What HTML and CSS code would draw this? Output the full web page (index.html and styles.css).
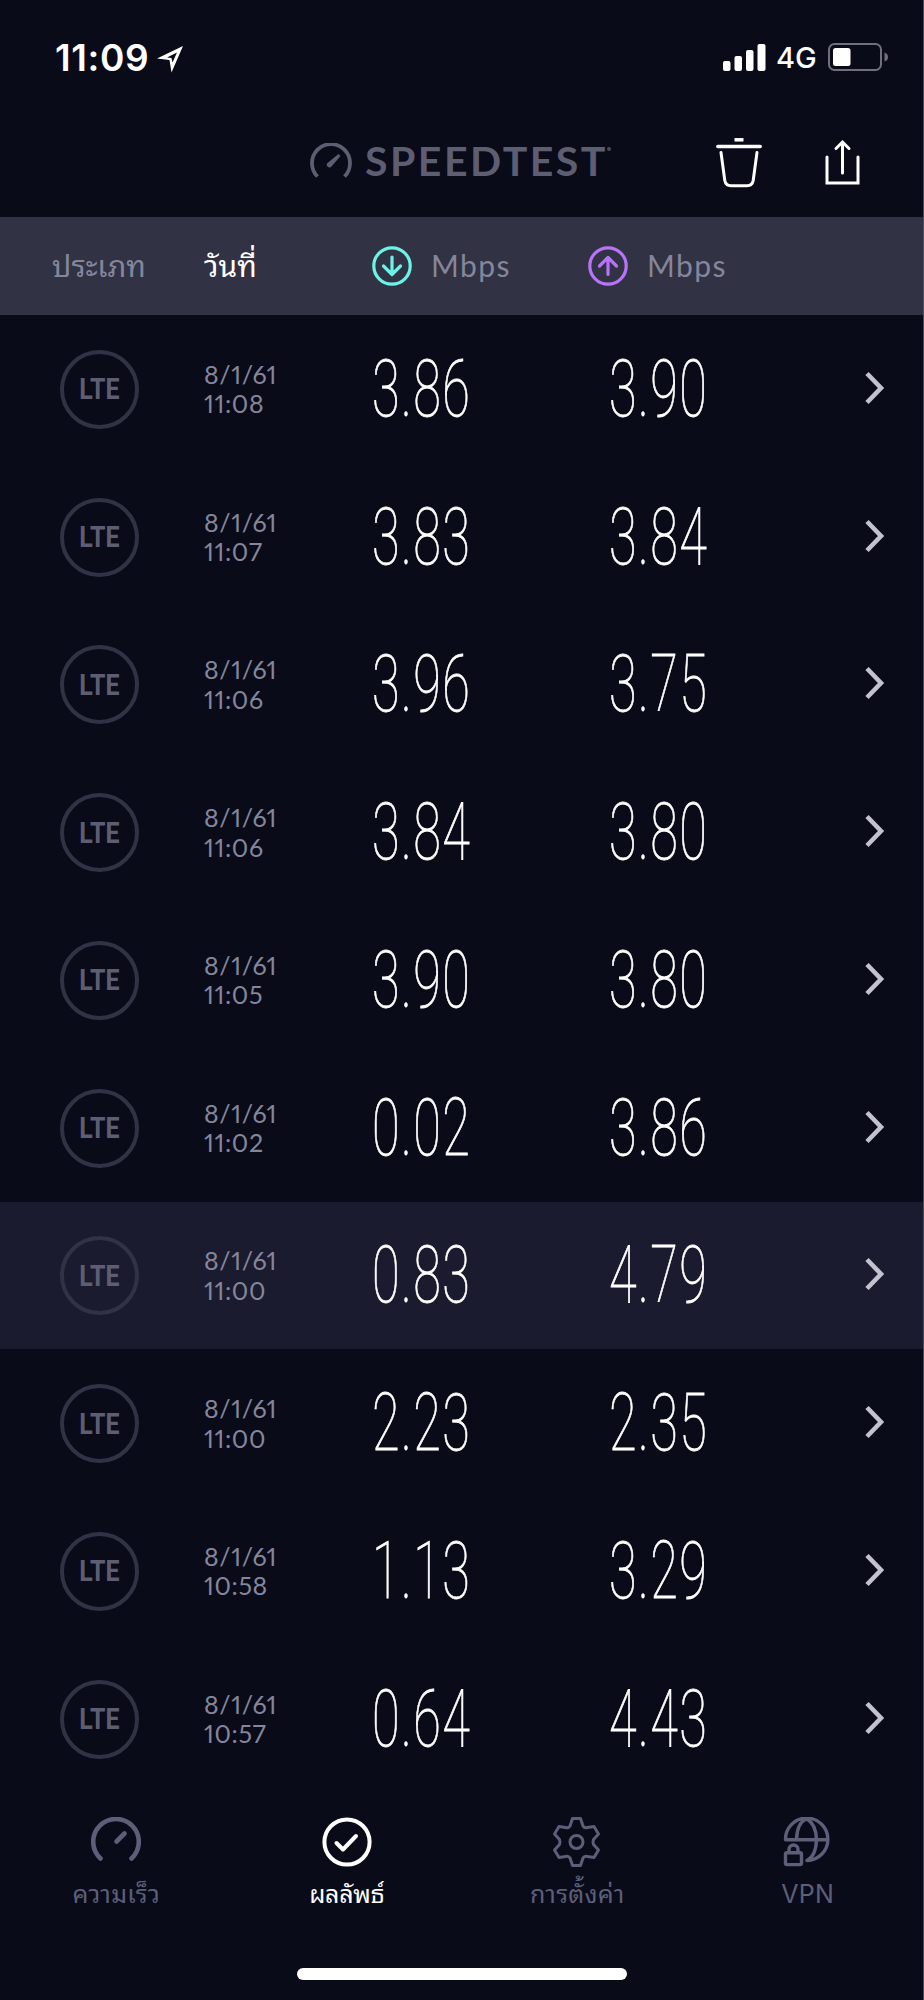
FILE: index.html
```
<!DOCTYPE html>
<html lang="th">
<head>
  <meta charset="utf-8">
  <title>Speedtest</title>
  <link rel="stylesheet" href="styles.css">
</head>
<body>
  <svg class="defs" width="0" height="0">
    <symbol id="chevron" viewBox="0 0 22 34">
      <path d="M4 2.500 L18 17 L4 31.500" fill="none" stroke="currentColor" stroke-width="4.600"/>
    </symbol>
  </svg>

  <div class="screen">
    <div class="status-bar">
      <div class="time">11:09</div>
      <svg class="location" viewBox="0 0 26 27">
        <path d="M0 12.500 L26 0 L14.500 26.500 L12.500 14 Z M10 11.500 L20 6.500 L15.500 16.500 L14.500 12 Z" fill="#fff" fill-rule="evenodd"/>
      </svg>
      <div class="status-right">
        <svg class="signal" viewBox="0 0 43 27">
          <rect x="0" y="17" width="7.5" height="10" rx="2"/>
          <rect x="11.5" y="12" width="7.5" height="15" rx="2"/>
          <rect x="23" y="6" width="7.5" height="21" rx="2"/>
          <rect x="34.5" y="0" width="8" height="27" rx="2"/>
        </svg>
        <span class="network">4G</span>
        <svg class="battery" viewBox="0 0 62 28">
          <rect x="1" y="1" width="52" height="26" rx="5.5" fill="none" stroke="#6f707c" stroke-width="2"/>
          <rect x="5" y="5" width="17.5" height="18" rx="2.5" fill="#fff"/>
          <path d="M56.500 9.500 Q60 10.500 60 14 Q60 17.500 56.500 18.500 Z" fill="#6f707c"/>
        </svg>
      </div>
    </div>

    <div class="nav-bar">
      <div class="logo">
        <svg class="logo-icon" viewBox="0 0 42 36">
          <path d="M7.500 33.500 A19 19 0 1 1 34.500 33.500" fill="none" stroke="currentColor" stroke-width="3.800"/>
          <path d="M28.500 11 L30.500 13 L21.500 23.500 A2.500 2.500 0 0 1 17.500 20 Z" fill="currentColor"/>
        </svg>
        <span class="logo-text">SPEEDTEST</span><span class="dot"></span>
      </div>
      <svg class="trash" viewBox="0 0 46 50">
        <path d="M18.500 1.800 H27.500" stroke-width="3.500"/>
        <path d="M1.800 8.600 H44.200" stroke-width="3.500" stroke-linecap="round"/>
        <path d="M5 14.500 L8.800 42.500 Q9.800 47.700 15 47.700 H31 Q36.200 47.700 37.200 42.500 L41 14.500" stroke-width="3" stroke-linecap="round"/>
      </svg>
      <svg class="share" viewBox="0 0 36 46">
        <path d="M2 18 V44 H33 V18" stroke-linecap="round"/>
        <path d="M17.500 34 V3.500 M11 9.500 L17.500 3 L24 9.500" stroke-linecap="round"/>
      </svg>
    </div>

    <div class="row table-head">
      <div class="col-type">ประเภท</div>
      <div class="col-date selected">วันที่</div>
      <div class="col-down">
        <svg class="arrow down" viewBox="0 0 40 40"><circle cx="20" cy="20" r="18.200"/><path d="M20 11 V28 M11.500 20 L20 28.500 L28.500 20"/></svg>
        <span>Mbps</span>
      </div>
      <div class="col-up">
        <svg class="arrow up" viewBox="0 0 40 40"><circle cx="20" cy="20" r="18.200"/><path d="M20 28.500 V12 M11.500 20 L20 11.500 L28.500 20"/></svg>
        <span>Mbps</span>
      </div>
    </div>

    <div class="results">
      <div class="row result">
        <div class="badge"><span>LTE</span></div>
        <div class="date">8/1/61<br>11:08</div>
        <div class="speed"><span>3.86</span></div>
        <div class="speed"><span>3.90</span></div>
        <svg class="chevron"><use href="#chevron"/></svg>
      </div>
      <div class="row result">
        <div class="badge"><span>LTE</span></div>
        <div class="date">8/1/61<br>11:07</div>
        <div class="speed"><span>3.83</span></div>
        <div class="speed"><span>3.84</span></div>
        <svg class="chevron"><use href="#chevron"/></svg>
      </div>
      <div class="row result">
        <div class="badge"><span>LTE</span></div>
        <div class="date">8/1/61<br>11:06</div>
        <div class="speed"><span>3.96</span></div>
        <div class="speed"><span>3.75</span></div>
        <svg class="chevron"><use href="#chevron"/></svg>
      </div>
      <div class="row result">
        <div class="badge"><span>LTE</span></div>
        <div class="date">8/1/61<br>11:06</div>
        <div class="speed"><span>3.84</span></div>
        <div class="speed"><span>3.80</span></div>
        <svg class="chevron"><use href="#chevron"/></svg>
      </div>
      <div class="row result">
        <div class="badge"><span>LTE</span></div>
        <div class="date">8/1/61<br>11:05</div>
        <div class="speed"><span>3.90</span></div>
        <div class="speed"><span>3.80</span></div>
        <svg class="chevron"><use href="#chevron"/></svg>
      </div>
      <div class="row result">
        <div class="badge"><span>LTE</span></div>
        <div class="date">8/1/61<br>11:02</div>
        <div class="speed"><span>0.02</span></div>
        <div class="speed"><span>3.86</span></div>
        <svg class="chevron"><use href="#chevron"/></svg>
      </div>
      <div class="row result highlighted">
        <div class="badge"><span>LTE</span></div>
        <div class="date">8/1/61<br>11:00</div>
        <div class="speed"><span>0.83</span></div>
        <div class="speed"><span>4.79</span></div>
        <svg class="chevron"><use href="#chevron"/></svg>
      </div>
      <div class="row result">
        <div class="badge"><span>LTE</span></div>
        <div class="date">8/1/61<br>11:00</div>
        <div class="speed"><span>2.23</span></div>
        <div class="speed"><span>2.35</span></div>
        <svg class="chevron"><use href="#chevron"/></svg>
      </div>
      <div class="row result">
        <div class="badge"><span>LTE</span></div>
        <div class="date">8/1/61<br>10:58</div>
        <div class="speed"><span>1.13</span></div>
        <div class="speed"><span>3.29</span></div>
        <svg class="chevron"><use href="#chevron"/></svg>
      </div>
      <div class="row result">
        <div class="badge"><span>LTE</span></div>
        <div class="date">8/1/61<br>10:57</div>
        <div class="speed"><span>0.64</span></div>
        <div class="speed"><span>4.43</span></div>
        <svg class="chevron"><use href="#chevron"/></svg>
      </div>
    </div>

    <div class="tab-bar">
      <div class="tab">
        <svg viewBox="0 0 50 50">
          <path d="M9.500 41.500 A22.800 22.800 0 1 1 40.500 41.500" stroke-width="4.600"/>
          <path d="M25.500 24.500 L33.500 16.500" stroke-width="4.600"/>
        </svg>
        <span>ความเร็ว</span>
      </div>
      <div class="tab active">
        <svg viewBox="0 0 50 50">
          <circle cx="25" cy="25" r="22.600" stroke-width="4"/>
          <path d="M14.500 26 L21 32.500 L34 19" stroke-width="4"/>
        </svg>
        <span>ผลลัพธ์</span>
      </div>
      <div class="tab">
        <svg viewBox="0 0 50 50">
          <path d="M20.500 1.500 H28.500 L31 9 Q32.500 11.500 35.500 10.500 L42 9.500 L46.500 17 L41.500 22.500 Q40.500 25 41.500 27.500 L46.500 33 L42 40.500 L35.500 39.500 Q32.500 38.500 31 41 L28.500 48.500 H20.500 L18 41 Q16.500 38.500 13.500 39.500 L7 40.500 L2.500 33 L7.500 27.500 Q8.500 25 7.500 22.500 L2.500 17 L7 9.500 L13.500 10.500 Q16.500 11.500 18 9 Z" stroke-width="3"/>
          <circle cx="24.500" cy="25" r="6.500" stroke-width="3"/>
        </svg>
        <span>การตั้งค่า</span>
      </div>
      <div class="tab">
        <svg viewBox="0 0 50 50">
          <path d="M2.500 22.800 A21.200 21.200 0 1 1 24 43.500 M2.500 22.800 H44 M13.500 22.500 Q14 6 23.500 1.800 Q33 7 33.500 22.500 Q33 39 24 43.500" stroke-width="3.400"/>
          <rect x="2.500" y="35.800" width="16" height="11.800" rx="1.500" stroke-width="3.400"/>
          <path d="M6 35.500 V32.500 A4.500 4.500 0 0 1 15 32.500 V35.500" stroke-width="3.400"/>
        </svg>
        <span>VPN</span>
      </div>
    </div>
    <div class="home-indicator"></div>
  </div>
</body>
</html>
```
FILE: styles.css
```
* {
  box-sizing: border-box;
}

body {
  margin: 0;
  background: #090b19;
  font-family: Inter, "Noto Sans Thai Looped", Loma, sans-serif;
  color: #fff;
}

.defs {
  display: block;
}

.screen {
  display: flex;
  flex-direction: column;
  width: 924px;
  height: 2000px;
  overflow: hidden;
  border-right: 1px solid #4b4c5c;
}

/* status bar */
.status-bar {
  display: flex;
  align-items: center;
  height: 114px;
  padding: 0 33px 0 55px;
}

.time {
  width: 102px;
  font-size: 37px;
  font-weight: 600;
  letter-spacing: 0.6px;
}

.location {
  width: 26px;
  height: 27px;
  margin-top: 4px;
}

.status-right {
  display: flex;
  align-items: center;
  margin-left: auto;
}

.signal {
  width: 43px;
  height: 27px;
  fill: #fff;
}

.network {
  width: 62px;
  padding-left: 10px;
  font-size: 29px;
  font-weight: 500;
}

.battery {
  width: 62px;
  height: 28px;
}

/* nav bar */
.nav-bar {
  display: flex;
  height: 103px;
  padding: 24px 60px 0 310px;
}

.logo {
  display: flex;
  width: 406px;
  padding-top: 5px;
  color: #5d5e72;
}

.logo-icon {
  width: 42px;
  height: 36px;
}

.logo-text {
  width: 242px;
  margin: -6px 0 0 13px;
  font-family: Lato, sans-serif;
  font-size: 41px;
  font-weight: 700;
  line-height: 48px;
  letter-spacing: 2.5px;
}

.dot {
  width: 4px;
  height: 4px;
  margin-top: 4px;
  border-radius: 50%;
  background: #4b4c5c;
}

.trash,
.share {
  fill: none;
  stroke: #fff;
}

.trash {
  width: 46px;
  height: 50px;
}

.share {
  width: 36px;
  height: 46px;
  margin: 1px 0 0 63px;
  stroke-width: 3px;
}

/* table */
.row {
  display: grid;
  align-items: center;
}

.table-head {
  grid-template-columns: 152px 168px 216px 1fr;
  height: 98px;
  padding-left: 52px;
  background: #313244;
  font-size: 30px;
  color: #85869b;
}

.col-type,
.col-date {
  padding-bottom: 5px;
}

.table-head .selected {
  color: #fff;
}

.col-down,
.col-up {
  display: flex;
  align-items: center;
  gap: 19px;
  font-family: Lato, sans-serif;
  font-size: 30px;
  letter-spacing: 1.4px;
}

.col-down span,
.col-up span {
  padding-bottom: 2px;
}

.arrow {
  width: 40px;
  height: 40px;
  fill: none;
  stroke-width: 3.2px;
  stroke-linecap: round;
  stroke-linejoin: round;
}

.arrow.down {
  stroke: #6bf3e6;
}

.arrow.up {
  stroke: #b873f8;
}

.result {
  grid-template-columns: 144px 168px 237px 1fr 22px;
  height: 147.75px;
  padding: 0 38px 0 60px;
}

.result.highlighted {
  background: #1a1b2e;
}

.badge {
  display: flex;
  align-items: center;
  justify-content: center;
  width: 79px;
  height: 79px;
  margin-top: 1px;
  border: 4px solid #313244;
  border-radius: 50%;
  font-family: Roboto, sans-serif;
  font-size: 29px;
  font-weight: 700;
  color: #5d5e72;
}

.badge span {
  transform: scaleX(0.86);
}

.date {
  padding-top: 1px;
  font-family: Lato, sans-serif;
  font-size: 25px;
  font-variant-numeric: proportional-nums;
  line-height: 29.5px;
  letter-spacing: 0.6px;
  color: #85869b;
}

.speed {
  font-family: Roboto, sans-serif;
  font-size: 80px;
  font-weight: 100;
  line-height: 80px;
  letter-spacing: 2.2px;
  -webkit-text-stroke: 0.8px #fff;
}

/* narrow, tall numerals */
.speed span {
  display: inline-block;
  transform: scaleX(0.63);
  transform-origin: left;
}

.chevron {
  width: 22px;
  height: 34px;
  margin-bottom: 2px;
  color: #c2c3cf;
}

/* tab bar */
.tab-bar {
  display: grid;
  grid-template-columns: repeat(4, 1fr);
  height: 175px;
  padding: 24px 0 0 1px;
}

.tab {
  display: flex;
  flex-direction: column;
  align-items: center;
  gap: 9px;
  font-size: 25px;
  line-height: 36px;
  letter-spacing: 0.3px;
  color: #5d5e78;
}

.tab svg {
  width: 50px;
  height: 50px;
  fill: none;
  stroke: currentColor;
  stroke-linecap: round;
  stroke-linejoin: round;
}

.tab.active {
  letter-spacing: -0.3px;
  color: #fff;
}

.home-indicator {
  width: 330px;
  height: 12px;
  margin: 0 auto;
  border-radius: 6px;
  background: #fff;
}
```
